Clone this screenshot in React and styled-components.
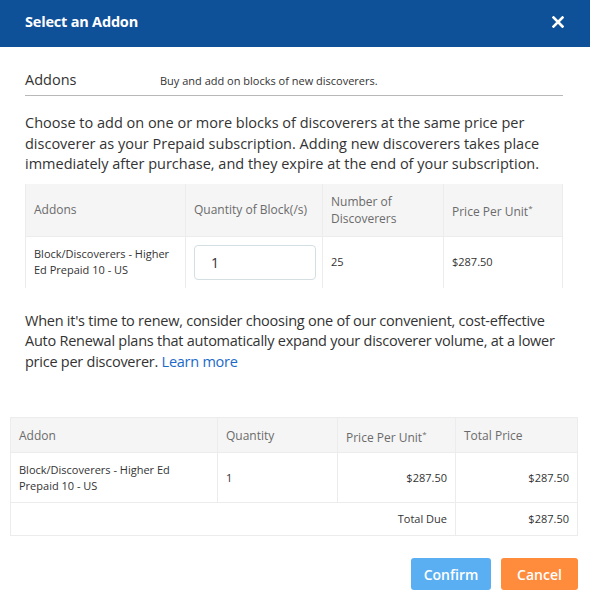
import styled, { createGlobalStyle } from "styled-components";

const GlobalStyle = createGlobalStyle`
  body {
    margin: 0;
    background: #fff;
    font-family: "Open Sans", "Liberation Sans", sans-serif;
    color: #333;
  }
`;

const Modal = styled.div`
  width: 590px;
  height: 606px;
  background: #fff;
  display: flex;
  flex-direction: column;
`;

const Header = styled.div`
  height: 47px;
  background: #0f5198;
  display: flex;
  align-items: center;
  justify-content: space-between;
  padding: 0 26px 4px 25px;
  box-sizing: border-box;
`;

const Title = styled.h2`
  margin: 0;
  font-size: 14.5px;
  font-weight: 700;
  color: #fff;
  letter-spacing: -0.2px;
`;

const Close = styled.button`
  border: 0;
  background: none;
  padding: 0;
  display: flex;
  cursor: pointer;
`;

const Body = styled.div`
  padding: 23px 27px 0 25px;
`;

const SectionHead = styled.div`
  display: flex;
  align-items: baseline;
  border-bottom: 1px solid #b8b8b8;
  padding-bottom: 6px;
`;

const SectionTitle = styled.span`
  font-size: 14.5px;
  color: #333;
  width: 135px;
`;

const SectionSub = styled.span`
  font-size: 11px;
  color: #333;
`;

const Para = styled.p`
  margin: ${(p) => p.$margin || "0"};
  margin-right: -14px;
  font-size: 14.5px;
  line-height: 20.5px;
  letter-spacing: ${(p) => (p.$tight ? "-0.25px" : "0")};
  color: #333;
`;

const Link = styled.a`
  color: #1b6ac9;
  text-decoration: none;
`;

const Table = styled.table`
  width: 100%;
  border-collapse: collapse;
  table-layout: fixed;
`;

const AddonTable = styled(Table)`
  margin-top: 9px;
`;

const HeadCell = styled.th`
  background: #f5f5f5;
  color: #6b6b6b;
  font-weight: 400;
  font-size: 12px;
  line-height: 17px;
  text-align: left;
  padding: 0 8px;
  height: ${(p) => p.$h || 52}px;
  border: 1px solid #ececec;
  border-top: 0;
`;

const Cell = styled.td`
  font-size: 11px;
  line-height: 16px;
  color: #333;
  padding: 0 8px;
  height: ${(p) => p.$h || 51}px;
  text-align: ${(p) => (p.$right ? "right" : "left")};
  border: 1px solid #ececec;
  border-bottom: ${(p) => (p.$noBottom ? "0" : "1px solid #ececec")};
  vertical-align: middle;
`;

const QtyInput = styled.input`
  width: 122px;
  height: 35px;
  box-sizing: border-box;
  border: 1px solid #d3dfe3;
  border-radius: 4px;
  padding: 0 16px;
  font-family: inherit;
  font-size: 14px;
  color: #333;
  outline: none;
`;

const Sup = styled.sup`
  font-size: 8px;
`;

const Summary = styled.div`
  padding: 45px 12px 0 10px;
`;

const SummaryTable = styled(Table)`
  border: 1px solid #ececec;
`;

const Footer = styled.div`
  display: flex;
  justify-content: flex-end;
  gap: 10px;
  padding: 22px 12px 0 0;
`;

const Button = styled.button`
  height: 32px;
  width: ${(p) => p.$w}px;
  border: 0;
  border-radius: 3px;
  background: ${(p) => p.$bg};
  color: #fff;
  font-family: inherit;
  font-size: 14px;
  font-weight: 600;
  cursor: pointer;
`;

export default function App() {
  return (
    <Modal>
      <GlobalStyle />
      <Header>
        <Title>Select an Addon</Title>
        <Close aria-label="Close">
          <svg width="12" height="12" viewBox="0 0 12 12">
            <path d="M1.5 1.5 L10.5 10.5 M10.5 1.5 L1.5 10.5" stroke="#fff" strokeWidth="2.6" strokeLinecap="square" />
          </svg>
        </Close>
      </Header>
      <Body>
        <SectionHead>
          <SectionTitle>Addons</SectionTitle>
          <SectionSub>Buy and add on blocks of new discoverers.</SectionSub>
        </SectionHead>
        <Para $margin="17px 0 0">
          Choose to add on one or more blocks of discoverers at the same price per discoverer as your Prepaid
          subscription. Adding new discoverers takes place immediately after purchase, and they expire at the end
          of your subscription.
        </Para>
        <AddonTable>
          <colgroup>
            <col style={{ width: 160 }} />
            <col style={{ width: 137 }} />
            <col style={{ width: 121 }} />
            <col />
          </colgroup>
          <thead>
            <tr>
              <HeadCell>Addons</HeadCell>
              <HeadCell>Quantity of Block(/s)</HeadCell>
              <HeadCell>Number of Discoverers</HeadCell>
              <HeadCell>
                Price Per Unit<Sup>*</Sup>
              </HeadCell>
            </tr>
          </thead>
          <tbody>
            <tr>
              <Cell $noBottom>Block/Discoverers - Higher Ed Prepaid 10 - US</Cell>
              <Cell $noBottom>
                <QtyInput defaultValue="1" />
              </Cell>
              <Cell $noBottom>25</Cell>
              <Cell $noBottom>$287.50</Cell>
            </tr>
          </tbody>
        </AddonTable>
        <Para $margin="23px 0 0" $tight>
          When it's time to renew, consider choosing one of our convenient, cost-effective Auto Renewal plans that
          automatically expand your discoverer volume, at a lower price per discoverer. <Link href="#">Learn more</Link>
        </Para>
      </Body>
      <Summary>
        <SummaryTable>
          <colgroup>
            <col style={{ width: 207 }} />
            <col style={{ width: 120 }} />
            <col style={{ width: 118 }} />
            <col />
          </colgroup>
          <thead>
            <tr>
              <HeadCell $h={34}>Addon</HeadCell>
              <HeadCell $h={34}>Quantity</HeadCell>
              <HeadCell $h={34}>
                Price Per Unit<Sup>*</Sup>
              </HeadCell>
              <HeadCell $h={34}>Total Price</HeadCell>
            </tr>
          </thead>
          <tbody>
            <tr>
              <Cell $h={49}>Block/Discoverers - Higher Ed Prepaid 10 - US</Cell>
              <Cell $h={49}>1</Cell>
              <Cell $h={49} $right>
                $287.50
              </Cell>
              <Cell $h={49} $right>
                $287.50
              </Cell>
            </tr>
            <tr>
              <Cell $h={32} colSpan={3} $right>
                Total Due
              </Cell>
              <Cell $h={32} $right>
                $287.50
              </Cell>
            </tr>
          </tbody>
        </SummaryTable>
      </Summary>
      <Footer>
        <Button $w={80} $bg="#5aaff2">
          Confirm
        </Button>
        <Button $w={77} $bg="#ff8b3d">
          Cancel
        </Button>
      </Footer>
    </Modal>
  );
}
